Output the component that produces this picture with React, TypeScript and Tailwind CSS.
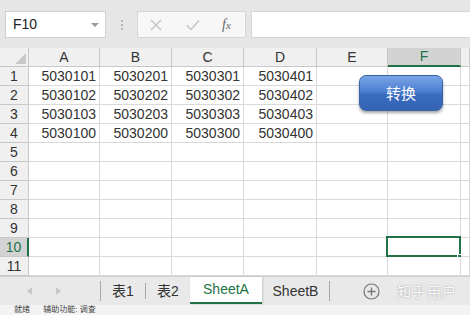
import React from "react";

const cols = ["A", "B", "C", "D", "E", "F", "G"];
const widths = [71, 72, 72, 73, 71, 73, 9];

const data: string[][] = [
  ["5030101", "5030201", "5030301", "5030401"],
  ["5030102", "5030202", "5030302", "5030402"],
  ["5030103", "5030203", "5030303", "5030403"],
  ["5030100", "5030200", "5030300", "5030400"],
];

const font = { fontFamily: '"Liberation Sans", "Noto Sans CJK SC", sans-serif' };

function TopBar() {
  return (
    <div className="h-[48px] bg-[#e6e6e6] pt-[11px] flex items-start">
      <div className="ml-[5px] w-[101px] h-[27px] bg-white border border-[#cfcfcf] flex items-center pl-[7px] pr-[6px]">
        <span className="text-[14px] text-[#222] flex-1">F10</span>
        <span className="w-0 h-0 border-l-[4px] border-r-[4px] border-t-[4px] border-l-transparent border-r-transparent border-t-[#9a9a9a]" />
      </div>
      <div className="w-[31px] h-[27px] flex flex-col items-center justify-center gap-[2px]">
        <span className="w-[2px] h-[2px] bg-[#b5b5b5]" />
        <span className="w-[2px] h-[2px] bg-[#b5b5b5]" />
        <span className="w-[2px] h-[2px] bg-[#b5b5b5]" />
      </div>
      <div className="w-[109px] h-[27px] bg-[#f7f7f7] border border-[#d6d6d6] flex items-center">
        <svg width="12" height="12" viewBox="0 0 12 12" className="ml-[12px]">
          <path d="M1 1 L11 11 M11 1 L1 11" stroke="#c4c4c4" strokeWidth="1.4" />
        </svg>
        <svg width="14" height="12" viewBox="0 0 14 12" className="ml-[24px]">
          <path d="M1 6.5 L5 10.5 L13 1.5" stroke="#c4c4c4" strokeWidth="1.4" fill="none" />
        </svg>
        <span
          className="ml-[22px] text-[14px] italic text-[#666]"
          style={{ fontFamily: '"Liberation Serif", serif' }}
        >
          f<span className="text-[11px]">x</span>
        </span>
      </div>
      <div className="ml-[5px] flex-1 h-[27px] bg-white border border-[#d6d6d6] border-r-0" />
    </div>
  );
}

function HeaderRow() {
  return (
    <div className="flex h-[19px]">
      <div className="w-[29px] bg-[#f0f0f0] border-r border-b border-[#c8c8c8] relative">
        <svg width="11" height="11" viewBox="0 0 11 11" className="absolute right-[2px] bottom-[2px]">
          <path d="M11 0 L11 11 L0 11 Z" fill="#c9c9c9" />
        </svg>
      </div>
      {cols.map((c, i) => {
        const sel = c === "F";
        return (
          <div
            key={c}
            style={{ width: widths[i] }}
            className={
              sel
                ? "bg-[#d3d3d3] border-r border-[#c8c8c8] border-b-2 border-b-[#217346] flex items-center justify-center text-[14px] text-[#217346]"
                : "bg-[#f0f0f0] border-r border-b border-[#c8c8c8] flex items-center justify-center text-[14px] text-[#333]"
            }
          >
            {c !== "G" ? c : ""}
          </div>
        );
      })}
    </div>
  );
}

function Row({ n }: { n: number }) {
  const vals = data[n - 1] || [];
  const selRow = n === 10;
  return (
    <div className="flex h-[19px]">
      <div
        className={
          selRow
            ? "w-[29px] bg-[#d3d3d3] border-r-2 border-r-[#217346] border-b border-b-[#c8c8c8] flex items-center justify-center text-[14px] text-[#217346]"
            : "w-[29px] bg-[#f0f0f0] border-r border-b border-[#c8c8c8] flex items-center justify-center text-[14px] text-[#333]"
        }
      >
        {n}
      </div>
      {cols.map((c, i) => (
        <div
          key={c}
          style={{ width: widths[i] }}
          className="bg-white border-r border-b border-[#d9d9d9] relative flex items-center justify-end pr-[3px] text-[14px] text-[#333]"
        >
          {vals[i] || ""}
          {selRow && c === "F" && (
            <>
              <div className="absolute left-[-2px] top-[-2px] right-[-1px] bottom-[-1px] border-2 border-[#217346]" />
              <div className="absolute right-[-3px] bottom-[-4px] w-[6px] h-[6px] bg-[#217346] border border-white" />
            </>
          )}
        </div>
      ))}
    </div>
  );
}

function TabBar() {
  return (
    <div className="h-[29px] bg-[#e9e9e9] border-t border-[#cfcfcf] flex items-stretch text-[14px] text-[#333]">
      <div className="w-[100px] flex items-center">
        <span className="ml-[27px] w-0 h-0 border-t-[4px] border-b-[4px] border-r-[5px] border-t-transparent border-b-transparent border-r-[#c8c8c8]" />
        <span className="ml-[24px] w-0 h-0 border-t-[4px] border-b-[4px] border-l-[5px] border-t-transparent border-b-transparent border-l-[#c8c8c8]" />
      </div>
      <div className="w-px my-[4px] bg-[#a8a8a8]" />
      <div className="w-[44px] flex items-center justify-center">表1</div>
      <div className="w-px my-[6px] bg-[#a8a8a8]" />
      <div className="w-[44px] flex items-center justify-center">表2</div>
      <div className="w-[72px] bg-white flex items-center justify-center text-[#217346] border-b-2 border-[#217346] mb-[1px] shadow-[1px_0_2px_rgba(0,0,0,0.15)]">
        SheetA
      </div>
      <div className="w-[67px] flex items-center justify-center">SheetB</div>
      <div className="w-px my-[4px] bg-[#a8a8a8]" />
      <div className="w-[50px] flex items-center justify-end">
        <svg width="17" height="17" viewBox="0 0 17 17">
          <circle cx="8.5" cy="8.5" r="7.5" fill="none" stroke="#777" strokeWidth="1.2" />
          <path d="M8.5 4.5 V12.5 M4.5 8.5 H12.5" stroke="#777" strokeWidth="1.4" />
        </svg>
      </div>
      <div
        className="ml-[17px] flex items-center text-[14px] text-[#fafafa] tracking-[1px]"
        style={{ textShadow: "0 0 2px rgba(0,0,0,0.35)", fontFamily: '"Noto Sans CJK SC", sans-serif' }}
      >
        知乎用户
      </div>
    </div>
  );
}

export default function App() {
  return (
    <div className="w-[470px] h-[315px] overflow-hidden bg-[#e6e6e6] relative" style={font}>
      <TopBar />
      <HeaderRow />
      {Array.from({ length: 11 }, (_, i) => (
        <Row key={i} n={i + 1} />
      ))}
      <TabBar />
      <div className="h-[10px] bg-[#f3f3f3] overflow-hidden text-[8px] text-[#444] pl-[14px] leading-[10px]">
        就绪 &nbsp;&nbsp;&nbsp;&nbsp; 辅助功能: 调查
      </div>
      <button
        className="absolute left-[359px] top-[75px] w-[84px] h-[36px] rounded-[7px] text-white text-[15px] shadow-[0_2px_3px_rgba(0,0,0,0.35)] border border-[#3a64a8]"
        style={{
          background: "linear-gradient(180deg, #7aa6e6 0%, #4c7fd0 45%, #3a6cc0 55%, #3563b3 100%)",
          fontFamily: '"Noto Sans CJK SC", sans-serif',
        }}
      >
        转换
      </button>
    </div>
  );
}
